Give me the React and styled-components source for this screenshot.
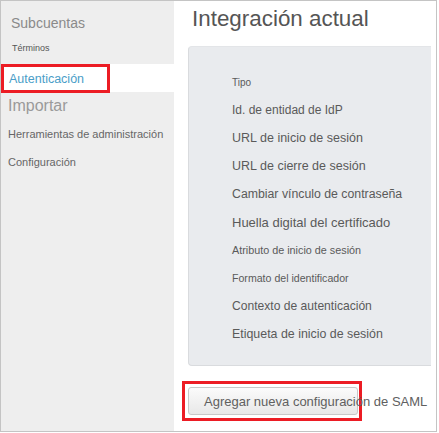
import React from "react";
import styled, { createGlobalStyle } from "styled-components";

const GlobalStyle = createGlobalStyle`
  body {
    margin: 0;
    background: #ffffff;
    font-family: "Liberation Sans", Arial, sans-serif;
  }
`;

const navItems = [
  { label: "Subcuentas", size: 14, color: "#8a8a8a", height: 28, indent: 3 },
  { label: "Términos", size: 9, color: "#555555", height: 22, indent: 4 },
  { label: "Autenticación", active: true },
  { label: "Importar", size: 16, color: "#9a9a9a", height: 28, indent: 0 },
  { label: "Herramientas de administración", size: 11, color: "#666666", height: 28, indent: 0 },
  { label: "Configuración", size: 11, color: "#666666", height: 28, indent: 0 },
];

const fields = [
  { label: "Tipo", size: 10 },
  { label: "Id. de entidad de IdP", size: 12 },
  { label: "URL de inicio de sesión", size: 12.5 },
  { label: "URL de cierre de sesión", size: 12.5 },
  { label: "Cambiar vínculo de contraseña", size: 12.3 },
  { label: "Huella digital del certificado", size: 13 },
  { label: "Atributo de inicio de sesión", size: 10.8 },
  { label: "Formato del identificador", size: 10.6 },
  { label: "Contexto de autenticación", size: 12.1 },
  { label: "Etiqueta de inicio de sesión", size: 12.4 },
];

const App = () => {
  return (
    <>
      <GlobalStyle />
      <Frame>
        <Sidebar>
          {navItems.map((item) =>
            item.active ? (
              <ActiveRow key={item.label}>
                <Highlight>{item.label}</Highlight>
              </ActiveRow>
            ) : (
              <NavItem
                key={item.label}
                $size={item.size}
                $color={item.color}
                $height={item.height}
                $indent={item.indent}
              >
                {item.label}
              </NavItem>
            )
          )}
        </Sidebar>
        <Main>
          <Title>Integración actual</Title>
          <Panel>
            {fields.map((f) => (
              <FieldRow key={f.label} $size={f.size}>
                {f.label}
              </FieldRow>
            ))}
          </Panel>
          <Callout>
            <AddButton>Agregar nueva configuración de SAML</AddButton>
          </Callout>
        </Main>
      </Frame>
    </>
  );
};

const Frame = styled.div`
  width: 437px;
  height: 432px;
  box-sizing: border-box;
  border: 1px solid #c4c4c4;
  display: flex;
  overflow: hidden;
`;

const Sidebar = styled.nav`
  width: 173px;
  flex-shrink: 0;
  background: #eeeeee;
  padding-top: 8px;
  display: flex;
  flex-direction: column;
`;

const NavItem = styled.div`
  height: ${(p) => p.$height}px;
  display: flex;
  align-items: center;
  padding-left: ${(p) => 7 + p.$indent}px;
  font-size: ${(p) => p.$size}px;
  color: ${(p) => p.$color};
  white-space: nowrap;
`;

const ActiveRow = styled.div`
  margin-top: 5px;
  height: 28px;
  background: #ffffff;
  display: flex;
`;

const Highlight = styled.span`
  width: 109px;
  height: 29px;
  box-sizing: border-box;
  border: 3px solid #ec1c24;
  display: flex;
  align-items: center;
  padding-left: 5px;
  font-size: 12.5px;
  color: #4a9ec8;
`;

const Main = styled.main`
  flex: 1;
  padding: 7px 5px 0 14px;
  display: flex;
  flex-direction: column;
  align-items: flex-start;
`;

const Title = styled.h1`
  margin: 0 0 16px 4px;
  height: 22px;
  line-height: 22px;
  font-size: 22.4px;
  font-weight: normal;
  color: #555555;
  white-space: nowrap;
`;

const Panel = styled.section`
  align-self: stretch;
  box-sizing: border-box;
  height: 320px;
  background: #e9ebee;
  border: 1px solid #d9dbde;
  border-right: none;
  border-top-color: #e3e5e8;
  border-radius: 4px 0 0 4px;
  padding: 21px 0 0 43px;
  display: flex;
  flex-direction: column;
`;

const FieldRow = styled.div`
  height: 28px;
  display: flex;
  align-items: center;
  font-size: ${(p) => p.$size}px;
  color: #5a5a5a;
  white-space: nowrap;
`;

const Callout = styled.div`
  margin: 15px 0 0 -6px;
  padding: 3px 1px 3px 3px;
  border: 3px solid #ec1c24;
`;

const AddButton = styled.button`
  display: block;
  width: 170px;
  height: 28px;
  box-sizing: border-box;
  padding: 0 0 0 15px;
  text-align: left;
  white-space: nowrap;
  overflow: visible;
  font-family: "Liberation Sans", Arial, sans-serif;
  font-size: 13px;
  color: #606060;
  background: linear-gradient(#fbfbfb, #e8e8e8);
  border: 1px solid #c8c8c8;
  border-radius: 3px;
`;

export default App;
